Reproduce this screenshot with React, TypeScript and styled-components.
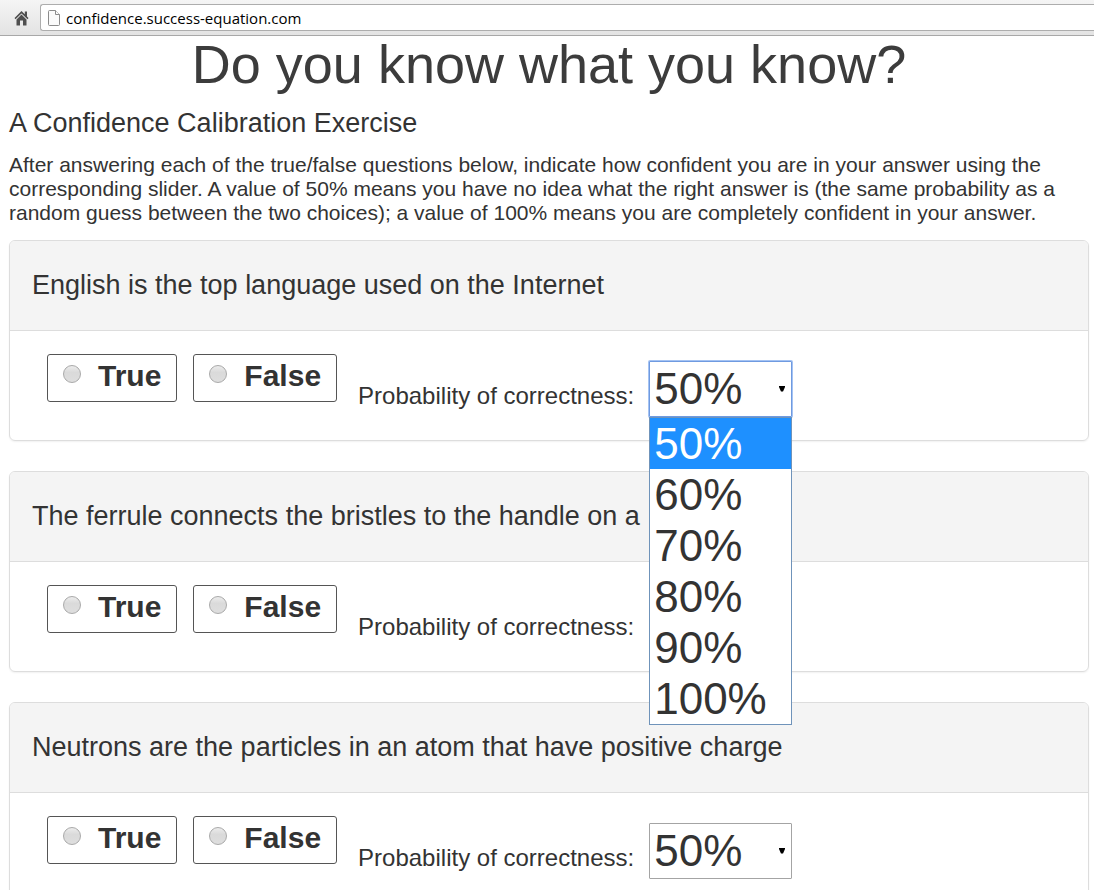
import React, { useState } from "react";
import styled, { createGlobalStyle } from "styled-components";

const GlobalStyle = createGlobalStyle`
  *, *::before, *::after { box-sizing: border-box; }
  html { scrollbar-width: none; }
  body {
    margin: 0;
    background: #fff;
    color: #333;
    font-family: "Liberation Sans", Arial, sans-serif;
  }
`;

const Toolbar = styled.header`
  display: flex;
  align-items: center;
  gap: 9px;
  height: 36px;
  padding-left: 12px;
  background: linear-gradient(#f5f5f5, #e3e3e3);
  border-bottom: 1px solid #a8a8a8;
`;

const HomeButton = styled.button`
  display: flex;
  justify-content: center;
  width: 19px;
  padding: 0;
  border: 0;
  background: none;
`;

const AddressBar = styled.label`
  display: flex;
  flex: 1;
  align-items: center;
  gap: 6px;
  height: 27px;
  padding-left: 7px;
  background: #fff;
  border: 1px solid #adadad;
  border-right: 0;
  border-radius: 3px 0 0 3px;
`;

const AddressInput = styled.input`
  flex: 1;
  min-width: 0;
  padding: 0;
  border: 0;
  outline: 0;
  background: none;
  color: #000;
  font: 15px/20px "Open Sans", "Noto Sans", sans-serif;
`;

const Page = styled.main`
  padding: 1px 5px 30px 9px;
`;

const Title = styled.h1`
  margin: 0 0 17px;
  color: #3c3c3c;
  font-size: 54px;
  font-weight: 400;
  line-height: 54px;
  text-align: center;
`;

const Subtitle = styled.h2`
  margin: 0 0 15px;
  font-size: 27px;
  font-weight: 400;
  line-height: 30px;
`;

const Intro = styled.p`
  margin: 0 0 15px;
  font-size: 21px;
  line-height: 24px;
`;

const Questions = styled.div`
  display: flex;
  flex-direction: column;
  gap: 30px;
`;

const Card = styled.section`
  border: 1px solid #ddd;
  border-radius: 6px;
  box-shadow: 0 1px 2px rgba(0, 0, 0, 0.06);
`;

const CardHeading = styled.h3`
  margin: 0;
  padding: 29px 22px 30px;
  background: #f4f4f4;
  border-bottom: 1px solid #ddd;
  border-radius: 5px 5px 0 0;
  font-size: 27px;
  font-weight: 400;
  line-height: 30px;
`;

const CardBody = styled.div`
  display: flex;
  align-items: flex-start;
  padding: 23px 37px;
`;

const Choices = styled.div`
  display: flex;
  gap: 16px;
`;

const Choice = styled.label`
  display: flex;
  align-items: flex-start;
  gap: 17px;
  height: 48px;
  padding: 4px 15px;
  border: 1px solid #555;
  border-radius: 3px;
  font-size: 30px;
  font-weight: 700;
  line-height: 34px;
`;

const Radio = styled.input`
  appearance: none;
  width: 18px;
  height: 18px;
  margin: 6px 0 0;
  border: 1px solid #a9a9a9;
  border-radius: 50%;
  background: linear-gradient(#ececec, #dadada 40%, #dedede);

  &:checked {
    background: radial-gradient(circle, #444 0 4px, #dedede 5px);
  }
`;

const Probability = styled.div`
  display: flex;
  align-items: baseline;
  gap: 15px;
  padding: 7px 0 0 21px;
`;

const ProbabilityLabel = styled.label`
  font-size: 24px;
  line-height: 27px;
`;

const SelectBox = styled.div`
  position: relative;
  width: 143px;
`;

const Select = styled.select<{ $open: boolean }>`
  appearance: none;
  display: block;
  width: 100%;
  height: 56px;
  padding: 0 4px;
  border: 1px solid ${(p) => (p.$open ? "#6f9ae0" : "#a4a4a4")};
  border-radius: 1px;
  outline: 0;
  box-shadow: ${(p) => (p.$open ? "0 0 0 1px #a5c3f3" : "none")};
  background: #fff;
  color: #333;
  font: 44px/54px "Liberation Sans", Arial, sans-serif;
`;

const Arrow = styled.svg`
  position: absolute;
  top: 25px;
  right: 7px;
  pointer-events: none;
`;

const Menu = styled.ul`
  position: absolute;
  z-index: 2;
  top: 100%;
  left: 0;
  width: 100%;
  margin: 0;
  padding: 0;
  list-style: none;
  background: #fff;
  border: 1px solid #6f93ba;
`;

const MenuItem = styled.li<{ $active: boolean }>`
  padding: 0 4px;
  background: ${(p) => (p.$active ? "#1e90ff" : "#fff")};
  color: ${(p) => (p.$active ? "#fff" : "#333")};
  font-size: 44px;
  line-height: 51px;
  cursor: default;
`;

const LEVELS = ["50%", "60%", "70%", "80%", "90%", "100%"];

const QUESTIONS = [
  "English is the top language used on the Internet",
  "The ferrule connects the bristles to the handle on a",
  "Neutrons are the particles in an atom that have positive charge",
];

function HomeIcon() {
  return (
    <svg width="15" height="16" viewBox="0 0 15 16" fill="#4f4f4f" aria-hidden="true">
      <path d="M7.5 1 L0.5 8 L1.5 9.2 L7.5 3.4 L13.5 9.2 L14.5 8 L13 6.5 V1.5 H10.8 V4.3 Z" />
      <path d="M2.5 9.4 L7.5 4.6 L12.5 9.4 V15.5 H9 V10.5 H6 V15.5 H2.5 Z" />
    </svg>
  );
}

function PageIcon() {
  return (
    <svg width="12" height="16" viewBox="0 0 12 16" fill="#fafafa" stroke="#8b8b8b" aria-hidden="true">
      <path d="M1.5 0.5 H7.5 L11.5 4.5 V14.5 Q11.5 15.5 10.5 15.5 H1.5 Q0.5 15.5 0.5 14.5 V1.5 Q0.5 0.5 1.5 0.5 Z" />
      <path d="M7.5 0.5 V4.5 H11.5" />
    </svg>
  );
}

interface QuestionProps {
  id: string;
  text: string;
  initiallyOpen: boolean;
}

function Question({ id, text, initiallyOpen }: QuestionProps) {
  const [level, setLevel] = useState(LEVELS[0]);
  const [open, setOpen] = useState(initiallyOpen);

  const choose = (value: string) => {
    setLevel(value);
    setOpen(false);
  };

  return (
    <Card>
      <CardHeading>{text}</CardHeading>
      <CardBody>
        <Choices role="radiogroup" aria-label={text}>
          {["True", "False"].map((answer) => (
            <Choice key={answer}>
              <Radio type="radio" name={id} value={answer} />
              {answer}
            </Choice>
          ))}
        </Choices>
        <Probability>
          <ProbabilityLabel htmlFor={`${id}-level`}>Probability of correctness:</ProbabilityLabel>
          <SelectBox>
            <Select
              id={`${id}-level`}
              $open={open}
              value={level}
              onChange={(e) => choose(e.target.value)}
            >
              {LEVELS.map((value) => (
                <option key={value}>{value}</option>
              ))}
            </Select>
            <Arrow width="6" height="6" viewBox="0 0 6 6" aria-hidden="true">
              <path d="M0 0 H6 V1 L4 5.5 H2 L0 1 Z" fill="#000" />
            </Arrow>
            {open && (
              <Menu role="listbox">
                {LEVELS.map((value) => (
                  <MenuItem
                    key={value}
                    role="option"
                    aria-selected={value === level}
                    $active={value === level}
                    onClick={() => choose(value)}
                  >
                    {value}
                  </MenuItem>
                ))}
              </Menu>
            )}
          </SelectBox>
        </Probability>
      </CardBody>
    </Card>
  );
}

export default function App() {
  return (
    <>
      <GlobalStyle />
      <Toolbar>
        <HomeButton type="button" aria-label="Home">
          <HomeIcon />
        </HomeButton>
        <AddressBar>
          <PageIcon />
          <AddressInput aria-label="Address" defaultValue="confidence.success-equation.com" />
        </AddressBar>
      </Toolbar>
      <Page>
        <Title>Do you know what you know?</Title>
        <Subtitle>A Confidence Calibration Exercise</Subtitle>
        <Intro>
          After answering each of the true/false questions below, indicate how confident you are in
          your answer using the corresponding slider. A value of 50% means you have no idea what the
          right answer is (the same probability as a random guess between the two choices); a value
          of 100% means you are completely confident in your answer.
        </Intro>
        <Questions>
          {QUESTIONS.map((text, i) => (
            <Question key={text} id={`question-${i + 1}`} text={text} initiallyOpen={i === 0} />
          ))}
        </Questions>
      </Page>
    </>
  );
}
